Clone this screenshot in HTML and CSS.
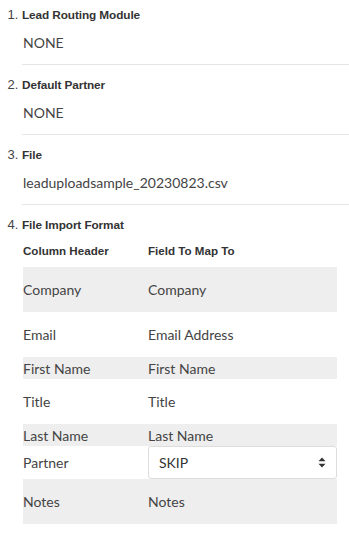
FILE: index.html
```html
<!DOCTYPE html>
<html lang="en">
  <head>
    <meta charset="UTF-8" />
    <meta name="viewport" content="width=device-width, initial-scale=1.0" />
    <title>Lead Import Summary</title>
    <link rel="stylesheet" href="styles.css">
  </head>
  <body>
    <ol class="steps">
      <li class="step">
        <h4 class="step-title">Lead Routing Module</h4>
        <div class="step-value">NONE</div>
      </li>
      <li class="step">
        <h4 class="step-title">Default Partner</h4>
        <div class="step-value">NONE</div>
      </li>
      <li class="step">
        <h4 class="step-title">File</h4>
        <div class="step-value">leaduploadsample_20230823.csv</div>
      </li>
      <li class="step last">
        <h4 class="step-title">File Import Format</h4>
        <table class="mapping">
          <thead>
            <tr>
              <th>Column Header</th>
              <th>Field To Map To</th>
            </tr>
          </thead>
          <tbody>
            <tr class="tall"><td>Company</td><td>Company</td></tr>
            <tr class="tall"><td>Email</td><td>Email Address</td></tr>
            <tr class="short"><td>First Name</td><td>First Name</td></tr>
            <tr class="tall"><td>Title</td><td>Title</td></tr>
            <tr class="short"><td>Last Name</td><td>Last Name</td></tr>
            <tr class="with-select">
              <td>Partner</td>
              <td>
                <div class="select-wrap">
                  <select class="field-select">
                    <option>SKIP</option>
                  </select>
                  <span class="select-arrow">
                    <svg width="8" height="11" viewBox="0 0 8 11"><path d="M4 0.5 L7.5 4.3 H0.5 Z M4 10.5 L7.5 6.7 H0.5 Z" fill="#333"/></svg>
                  </span>
                </div>
              </td>
            </tr>
            <tr class="tall"><td>Notes</td><td>Notes</td></tr>
          </tbody>
        </table>
      </li>
    </ol>
  </body>
</html>
```

FILE: styles.css
```css
body {
  margin: 0;
  background: #fff;
  font-family: "Lato", "Liberation Sans", sans-serif;
  color: #444;
}

.steps {
  margin: 0;
  padding: 8px 0 0 22px;
  list-style: decimal;
}

.step::marker {
  font-family: "Liberation Sans", Arial, sans-serif;
  font-size: 13px;
  color: #444;
}

.step {
  line-height: 14px;
  border-bottom: 1px solid #e6e6e6;
  margin-bottom: 13px;
  padding-bottom: 13px;
}

.step.last {
  border-bottom: none;
}

.step-title {
  margin: 0;
  font-family: "Liberation Sans", Arial, sans-serif;
  font-size: 11.8px;
  font-weight: bold;
  line-height: 14px;
  letter-spacing: -0.1px;
  color: #333;
}

.step-value {
  margin-top: 13px;
  padding-left: 1px;
  font-size: 14px;
  line-height: 16px;
  color: #444;
}

.mapping {
  margin-top: 8px;
  margin-left: 1px;
  width: 314px;
  border-collapse: collapse;
  font-size: 14px;
  line-height: 17px;
}

.mapping th {
  font-family: "Liberation Sans", Arial, sans-serif;
  font-size: 11.6px;
  font-weight: bold;
  color: #333;
  text-align: left;
  height: 14px;
  padding: 4px 0 9px;
  line-height: 14px;
  vertical-align: middle;
}

.mapping th:first-child,
.mapping td:first-child {
  width: 125px;
}

.mapping td {
  padding: 0;
  color: #444;
  vertical-align: middle;
}

.mapping tbody tr:nth-child(odd) {
  background: #eeeeee;
}

.mapping tr.tall td {
  height: 45px;
}

.mapping tr.short td {
  height: 22px;
}

.mapping tr.with-select td {
  height: 33px;
}

.select-wrap {
  position: relative;
}

.field-select {
  appearance: none;
  -webkit-appearance: none;
  display: block;
  width: 189px;
  height: 33px;
  padding: 0 10px;
  border: 1px solid #dddddd;
  border-radius: 3px;
  background: #fff;
  font-family: "Lato", sans-serif;
  font-size: 14px;
  color: #333;
}

.select-arrow {
  position: absolute;
  right: 11px;
  top: 11px;
  line-height: 0;
  pointer-events: none;
}
```
